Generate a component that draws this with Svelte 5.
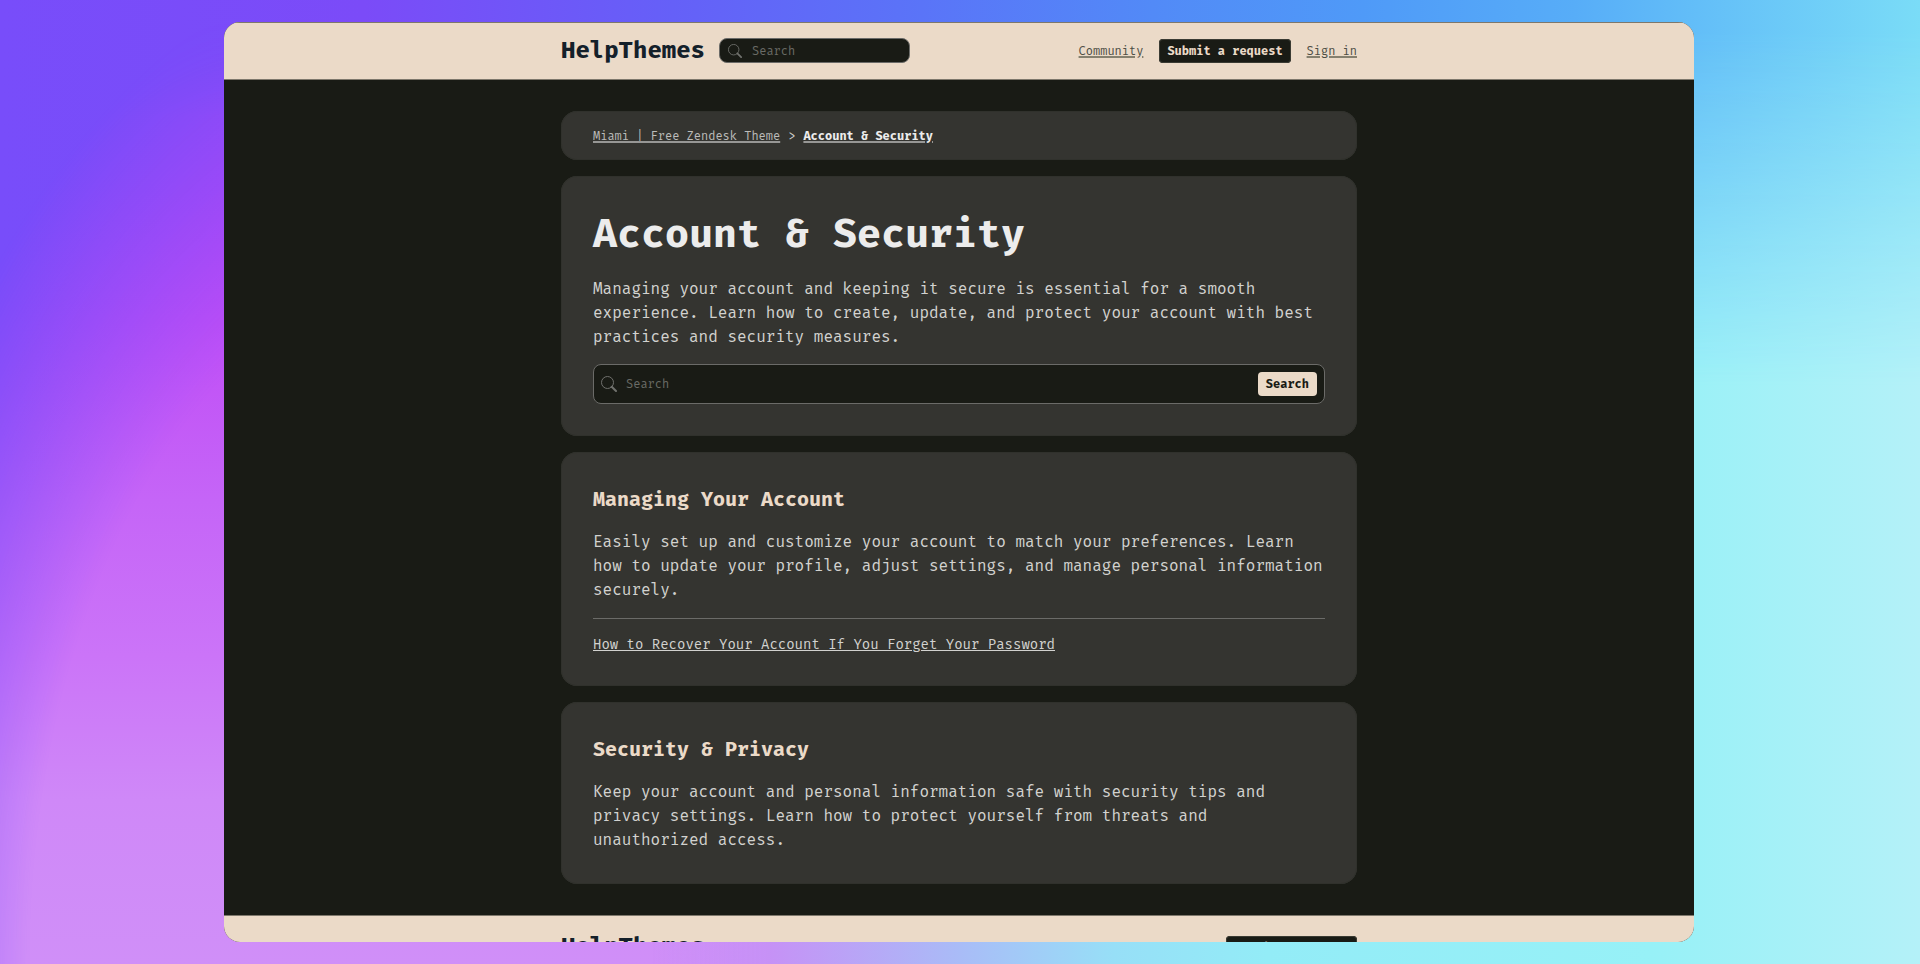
<script>
  const sections = [
    {
      title: 'Managing Your Account',
      text: 'Easily set up and customize your account to match your preferences. Learn how to update your profile, adjust settings, and manage personal information securely.',
      articles: ['How to Recover Your Account If You Forget Your Password']
    },
    {
      title: 'Security & Privacy',
      text: 'Keep your account and personal information safe with security tips and privacy settings. Learn how to protect yourself from threats and unauthorized access.',
      articles: []
    }
  ];
</script>

{#snippet magnifier()}
  <svg class="magnifier" viewBox="0 0 16 16" aria-hidden="true">
    <circle cx="6.5" cy="6.5" r="6" fill="none" stroke="currentColor" />
    <path d="M10.7 10.7 L15 15" fill="none" stroke="currentColor" stroke-width="2" stroke-linecap="round" />
  </svg>
{/snippet}

<div class="backdrop">
  <div class="window">
    <header class="bar">
      <div class="column bar-row">
        <a class="logo" href="#home">HelpThemes</a>
        <form class="search small" role="search">
          {@render magnifier()}
          <input type="search" placeholder="Search" aria-label="Search the help center" />
        </form>
        <nav>
          <a class="nav-link" href="#community">Community</a>
          <a class="button dark" href="#request">Submit a request</a>
          <a class="nav-link" href="#signin">Sign in</a>
        </nav>
      </div>
    </header>

    <main class="column">
      <nav class="card crumbs" aria-label="Breadcrumb">
        <a href="#home">Miami | Free Zendesk Theme</a>
        <span>&gt;</span>
        <a class="current" href="#account">Account &amp; Security</a>
      </nav>

      <section class="card">
        <h1>Account &amp; Security</h1>
        <p>
          Managing your account and keeping it secure is essential for a smooth experience. Learn how to
          create, update, and protect your account with best practices and security measures.
        </p>
        <form class="search large" role="search">
          {@render magnifier()}
          <input type="search" placeholder="Search" aria-label="Search articles" />
          <button type="button" class="button light">Search</button>
        </form>
      </section>

      {#each sections as section}
        <section class="card">
          <h2>{section.title}</h2>
          <p>{section.text}</p>
          {#if section.articles.length}
            <ul>
              {#each section.articles as article}
                <li><a href="#article">{article}</a></li>
              {/each}
            </ul>
          {/if}
        </section>
      {/each}
    </main>

    <footer class="bar">
      <div class="column bar-row">
        <a class="logo" href="#home">HelpThemes</a>
        <nav>
          <a class="button dark" href="#request">Submit a request</a>
        </nav>
      </div>
    </footer>
  </div>
</div>

<style>
  :global(body) {
    margin: 0;
    overflow: hidden;
  }

  .backdrop {
    --ink: #191b15;
    --sand: #ebdac8;
    --panel: #343430;
    --line: #6b6b68;
    position: relative;
    isolation: isolate;
    box-sizing: border-box;
    height: 100vh;
    padding: 22px 226px 22px 224px;
    font-family: 'Fira Mono', 'Liberation Mono', monospace;
    font-size: 16px;
    font-weight: 300;
    line-height: 24px;
    color: #d2d2cf;
    background: linear-gradient(to right, #784dfa 0%, #7b4bf8 19%, #6560f8 35%, #5a74f8 48%, #528af7 60%, #4f9af8 71%, #57adf8 82%, #62bdf8 88%, #7adcf7 100%);
  }

  .backdrop::before,
  .backdrop::after {
    content: '';
    position: absolute;
    inset: 0;
    z-index: -1;
  }

  .backdrop::before {
    background: linear-gradient(to bottom, #bb48f6 20%, #c04df6 33%, #c565f7 52%, #cb74f8 68%, #cf88f8 83%, #d08ff8 100%);
    mask-image:
      radial-gradient(ellipse 500px 828px at 450px 964px, #000 84%, #00000080 104%, transparent 124%),
      linear-gradient(to bottom, transparent 2%, #000 12%);
    mask-composite: intersect;
  }

  .backdrop::after {
    background: linear-gradient(to right, #c98af700 34%, #c691f6 40%, #a9bcf7 50%, #97dff7 58%, #93ecf7 66%, #97f1f7 86%, #b4f1f8 100%);
    mask-image: linear-gradient(to bottom, transparent 3%, #000 40%);
  }

  .window {
    display: flex;
    flex-direction: column;
    height: 100%;
    overflow: hidden;
    border-radius: 16px;
    background: var(--ink);
  }

  .column {
    box-sizing: border-box;
    width: 100%;
    max-width: 796px;
    margin: 0 auto;
  }

  .bar {
    flex: none;
    padding: 15px 0 16px;
    border-top: 1px solid #7e786c;
    border-bottom: 1px solid #7e786c;
    background: var(--sand);
  }

  footer.bar {
    padding-top: 19px;
  }

  .bar-row {
    display: flex;
    align-items: center;
    gap: 14px;
    height: 25px;
  }

  .logo {
    padding-bottom: 2px;
    font-size: 24px;
    font-weight: 600;
    color: #14202a;
    text-decoration: none;
  }

  footer .logo {
    padding-bottom: 4px;
  }

  .bar nav {
    display: flex;
    align-items: center;
    gap: 16px;
    margin-left: auto;
    font-size: 12px;
  }

  .nav-link {
    color: #4d4e45;
    text-decoration: underline 2px #85806f;
  }

  .button {
    box-sizing: border-box;
    height: 24px;
    padding: 0 8px;
    border: 0;
    border-radius: 4px;
    font: 700 12px/24px 'Fira Mono', 'Liberation Mono', monospace;
    text-decoration: none;
  }

  .dark {
    background: var(--ink);
    color: var(--sand);
    box-shadow: inset 0 0 0 1px #3a3b33;
  }

  .light {
    background: var(--sand);
    color: var(--ink);
  }

  .search {
    display: flex;
    align-items: center;
    box-sizing: border-box;
    border: 1px solid var(--line);
    border-radius: 8px;
    background: var(--ink);
    color: #70716d;
  }

  .search input {
    flex: 1;
    min-width: 0;
    height: 22px;
    padding: 0;
    border: 0;
    outline: 0;
    background: none;
    font: 12px/22px 'Fira Mono', 'Liberation Mono', monospace;
    color: #dededc;
  }

  .search input::placeholder {
    color: #6a6b66;
  }

  .magnifier {
    flex: none;
  }

  .small {
    width: 191px;
    height: 25px;
    padding: 0 8px;
    gap: 10px;
  }

  .small .magnifier {
    width: 14px;
    height: 14px;
  }

  .large {
    height: 40px;
    padding: 0 7px;
    gap: 9px;
  }

  .large .magnifier {
    width: 16px;
    height: 16px;
  }

  main {
    display: flex;
    flex: none;
    flex-direction: column;
    gap: 16px;
    padding: 31px 0;
  }

  .card {
    padding: 32px;
    border-radius: 16px;
    background: var(--panel);
    box-shadow: inset 0 0 0 1px #30312c;
  }

  .crumbs {
    display: flex;
    gap: 8px;
    padding-top: 13px;
    padding-bottom: 12px;
    font-size: 12px;
  }

  .crumbs a {
    color: #bcbcba;
    text-decoration: underline 2px #979795;
  }

  .crumbs .current {
    font-weight: 700;
    color: #ececec;
  }

  h1,
  h2,
  p,
  ul {
    margin: 0;
  }

  h1 {
    margin-bottom: 17px;
    font-size: 40px;
    line-height: 52px;
    color: #ececec;
  }

  h2 {
    margin-bottom: 16px;
    font-size: 20px;
    line-height: 30px;
    color: var(--sand);
  }

  p + form {
    margin-top: 15px;
  }

  ul {
    margin-top: 16px;
    padding: 17px 0 0;
    border-top: 1px solid var(--line);
    list-style: none;
  }

  li {
    font-size: 14px;
    line-height: 18px;
  }

  li a {
    color: #d2d2cf;
    text-decoration: underline 1px;
  }
</style>
